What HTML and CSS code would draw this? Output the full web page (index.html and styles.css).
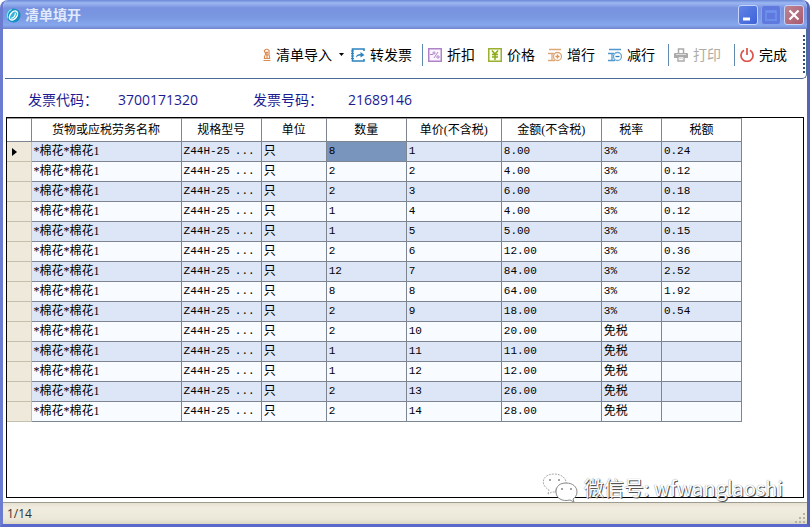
FILE: index.html
```html
<!DOCTYPE html>
<html lang="zh-CN">
<head>
<meta charset="utf-8">
<title>清单填开</title>
<link rel="stylesheet" href="styles.css">
</head>
<body>
<div class="window">
  <header class="titlebar">
    <svg class="app-icon" viewBox="0 0 16 16" aria-hidden="true">
      <circle cx="8" cy="8" r="7.5" fill="#1590c4"/>
      <path d="M2 11A7 7 0 0 1 6 1.500" stroke="#7ee0ee" stroke-width="1.500" fill="none"/>
      <ellipse cx="8" cy="8" rx="3.500" ry="5.500" transform="rotate(38 8 8)" fill="#35b4d8" stroke="#fff" stroke-width="1.500"/>
      <path d="M5.500 11C10 10 10 7 10 5" stroke="#fff" stroke-width="1.200" fill="none"/>
    </svg>
    <h1 class="title">清单填开</h1>
    <div class="controls">
      <button class="ctl" aria-label="最小化"><svg viewBox="0 0 18 18"><path d="M4 13H11" stroke="#fff" stroke-width="3"/></svg></button>
      <button class="ctl ctl-max" aria-label="最大化" disabled><svg viewBox="0 0 18 18"><path d="M4 5H14V14H4ZM4 6H14" stroke="#6f93ee" stroke-width="1.500" fill="none"/></svg></button>
      <button class="ctl ctl-close" aria-label="关闭"><svg viewBox="0 0 18 18"><path d="M4.500 4.500L13.500 13.500M13.500 4.500L4.500 13.500" stroke="#fff" stroke-width="2.200"/></svg></button>
    </div>
  </header>

  <nav class="toolbar">
    <button class="tool">
      <svg class="narrow" viewBox="0 0 8 14"><path d="M1.500 4.500V2.500Q4 0 6 2.500V7H2.500V4.500H5M1.500 7.500V10.500H6.500V7.500M0.500 12.500H7.500M4 3.500V10" stroke="#dc8a50" stroke-width="1.200" fill="none"/></svg>
      <span>清单导入</span>
      <svg class="caret" viewBox="0 0 5 3"><path d="M0 0H5L2.500 3Z" fill="#000"/></svg>
    </button>
    <button class="tool">
      <svg viewBox="0 0 14 14"><path d="M13 3V1H1.500V13H13V11" stroke="#2d84bd" stroke-width="1.600" fill="none"/><path d="M0 3H3M0 5.500H3M0 8H3M0 10.500H3" stroke="#2d84bd"/><path d="M5 9.500Q5 6 9.500 6V4L13.500 7L9.500 9.500V7.500Q6.500 7.500 5 9.500Z" fill="#2d84bd"/></svg>
      <span>转发票</span>
    </button>
    <i class="sep"></i>
    <button class="tool">
      <svg viewBox="0 0 14 14"><rect x=".75" y=".75" width="12.500" height="12.500" fill="#fbf5ff" stroke="#b083c8" stroke-width="1.500"/><path d="M2 6.500H5M10 4L6 10" stroke="#b083c8"/><circle cx="6" cy="5" r="1.100" fill="none" stroke="#b083c8"/><circle cx="10" cy="9" r="1.200" fill="none" stroke="#b083c8"/></svg>
      <span>折扣</span>
    </button>
    <button class="tool tool-next">
      <svg viewBox="0 0 14 14"><rect x=".75" y=".75" width="12.500" height="12.500" fill="#fafde9" stroke="#9caf35" stroke-width="1.500"/><path d="M4 2.500L7 6L10 2.500M7 6V12M4 6.500H10M4 9H10" stroke="#8ba91b" stroke-width="1.500" fill="none"/></svg>
      <span>价格</span>
    </button>
    <button class="tool tool-next">
      <svg viewBox="0 0 14 14"><path d="M1 1.500H13M0 5.500H6M0 12.500H7M4 5.500V12.500" stroke="#dda878" stroke-width="1.300" fill="none"/><circle cx="9.500" cy="8.500" r="4" fill="#fff" stroke="#dda878" stroke-width="1.300"/><path d="M7.500 8.500H11.500M9.500 6.500V10.500" stroke="#dc9550" stroke-width="1.300"/></svg>
      <span>增行</span>
    </button>
    <button class="tool tool-next">
      <svg viewBox="0 0 14 14"><path d="M1 1.500H13M0 5.500H6M0 12.500H7M4 5.500V12.500" stroke="#5199cd" stroke-width="1.300" fill="none"/><circle cx="9.500" cy="8.500" r="4" fill="#fff" stroke="#68a9d8" stroke-width="1.300"/><path d="M7.500 8.500H11.500" stroke="#307fb9" stroke-width="1.300"/></svg>
      <span>减行</span>
    </button>
    <i class="sep sep-wide"></i>
    <button class="tool" disabled>
      <svg viewBox="0 0 14 14"><path d="M4.500 5V1H9.500V5" stroke="#aaa" stroke-width="1.500" fill="none"/><path d="M1 5H13Q14 5 14 6V10H0V6Q0 5 1 5Z" fill="#aaa"/><path d="M4 8.500H10V13H4Z" fill="#fff" stroke="#aaa" stroke-width="1.500"/><path d="M4 10.500H10M2 6.500H12" stroke="#ddd"/></svg>
      <span>打印</span>
    </button>
    <i class="sep sep-wide"></i>
    <button class="tool">
      <svg viewBox="0 0 14 14"><path d="M4 2.200A6 6 0 1 0 10 2.200M7 0V7" stroke="#dc5148" stroke-width="1.700" fill="none"/></svg>
      <span>完成</span>
    </button>
    <i class="grip"></i>
  </nav>

  <main class="content">
    <dl class="info">
      <div><dt>发票代码：</dt><dd>3700171320</dd></div>
      <div><dt>发票号码：</dt><dd>21689146</dd></div>
    </dl>
    <div class="grid">
      <table>
        <colgroup><col class="c-mark"><col class="c-name"><col class="c-spec"><col class="c-unit"><col class="c-qty"><col class="c-price"><col class="c-sum"><col class="c-rate"><col class="c-tax"></colgroup>
        <thead><tr><th></th><th>货物或应税劳务名称</th><th>规格型号</th><th>单位</th><th>数量</th><th>单价(不含税)</th><th>金额(不含税)</th><th>税率</th><th>税额</th></tr></thead>
        <tbody>
          <tr><th><svg class="pointer" viewBox="0 0 5 8"><path d="M0 0L5 4L0 8Z"/></svg></th><td>*棉花*棉花1</td><td><div class="spec"><span>Z44H-25</span><span>...</span></div></td><td>只</td><td class="num selected">8</td><td class="num">1</td><td class="num">8.00</td><td class="num">3%</td><td class="num">0.24</td></tr>
          <tr><th></th><td>*棉花*棉花1</td><td><div class="spec"><span>Z44H-25</span><span>...</span></div></td><td>只</td><td class="num">2</td><td class="num">2</td><td class="num">4.00</td><td class="num">3%</td><td class="num">0.12</td></tr>
          <tr><th></th><td>*棉花*棉花1</td><td><div class="spec"><span>Z44H-25</span><span>...</span></div></td><td>只</td><td class="num">2</td><td class="num">3</td><td class="num">6.00</td><td class="num">3%</td><td class="num">0.18</td></tr>
          <tr><th></th><td>*棉花*棉花1</td><td><div class="spec"><span>Z44H-25</span><span>...</span></div></td><td>只</td><td class="num">1</td><td class="num">4</td><td class="num">4.00</td><td class="num">3%</td><td class="num">0.12</td></tr>
          <tr><th></th><td>*棉花*棉花1</td><td><div class="spec"><span>Z44H-25</span><span>...</span></div></td><td>只</td><td class="num">1</td><td class="num">5</td><td class="num">5.00</td><td class="num">3%</td><td class="num">0.15</td></tr>
          <tr><th></th><td>*棉花*棉花1</td><td><div class="spec"><span>Z44H-25</span><span>...</span></div></td><td>只</td><td class="num">2</td><td class="num">6</td><td class="num">12.00</td><td class="num">3%</td><td class="num">0.36</td></tr>
          <tr><th></th><td>*棉花*棉花1</td><td><div class="spec"><span>Z44H-25</span><span>...</span></div></td><td>只</td><td class="num">12</td><td class="num">7</td><td class="num">84.00</td><td class="num">3%</td><td class="num">2.52</td></tr>
          <tr><th></th><td>*棉花*棉花1</td><td><div class="spec"><span>Z44H-25</span><span>...</span></div></td><td>只</td><td class="num">8</td><td class="num">8</td><td class="num">64.00</td><td class="num">3%</td><td class="num">1.92</td></tr>
          <tr><th></th><td>*棉花*棉花1</td><td><div class="spec"><span>Z44H-25</span><span>...</span></div></td><td>只</td><td class="num">2</td><td class="num">9</td><td class="num">18.00</td><td class="num">3%</td><td class="num">0.54</td></tr>
          <tr><th></th><td>*棉花*棉花1</td><td><div class="spec"><span>Z44H-25</span><span>...</span></div></td><td>只</td><td class="num">2</td><td class="num">10</td><td class="num">20.00</td><td>免税</td><td></td></tr>
          <tr><th></th><td>*棉花*棉花1</td><td><div class="spec"><span>Z44H-25</span><span>...</span></div></td><td>只</td><td class="num">1</td><td class="num">11</td><td class="num">11.00</td><td>免税</td><td></td></tr>
          <tr><th></th><td>*棉花*棉花1</td><td><div class="spec"><span>Z44H-25</span><span>...</span></div></td><td>只</td><td class="num">1</td><td class="num">12</td><td class="num">12.00</td><td>免税</td><td></td></tr>
          <tr><th></th><td>*棉花*棉花1</td><td><div class="spec"><span>Z44H-25</span><span>...</span></div></td><td>只</td><td class="num">2</td><td class="num">13</td><td class="num">26.00</td><td>免税</td><td></td></tr>
          <tr><th></th><td>*棉花*棉花1</td><td><div class="spec"><span>Z44H-25</span><span>...</span></div></td><td>只</td><td class="num">2</td><td class="num">14</td><td class="num">28.00</td><td>免税</td><td></td></tr>
        </tbody>
      </table>
    </div>
  </main>

  <footer class="status">
    <span>1/14</span>
    <svg class="resize" viewBox="0 0 11 11"><path d="M9 0h2v2h-2zM9 4h2v2h-2zM9 8h2v2h-2zM5 4h2v2h-2zM5 8h2v2h-2zM1 8h2v2h-2z" fill="#b9b29f"/></svg>
  </footer>

  <div class="watermark">
    <svg viewBox="0 0 36 30"><g fill="#fff" stroke="#aaa" stroke-dasharray="2 1"><path d="M6 21L7 17C-3 11 1 1 12 1C20 1 25 6 24 11C15 11 12 18 14 19L10 19Z"/><path d="M14 19C14 13 18 10 24 10C31 10 35 14 35 19C35 22 33 25 31 26L32 29L28 27C20 29 14 25 14 19Z" stroke="#888" stroke-dasharray="none"/></g><path d="M7 7h2M16 7h2M19 16h2M28 16h2" stroke="#888" stroke-width="1.500"/></svg>
    <span>微信号: wfwanglaoshi</span>
  </div>
</div>
</body>
</html>
```
FILE: styles.css
```css
* { box-sizing: border-box; }
body {
  margin: 0;
  background: #fff;
  font-family: "Open Sans", "Noto Sans CJK SC", sans-serif;
  font-size: 14px;
  color: #000;
}
button {
  border: 0;
  padding: 0;
  background: none;
  font: inherit;
  color: inherit;
}
.window {
  position: relative;
  display: flex;
  flex-direction: column;
  height: 100vh;
  border: 3px solid #6a7bd0;
  border-top: 0;
  border-right-color: #5662b4;
  border-bottom-color: #5a67cc;
  border-radius: 8px 8px 0 0;
  background: #fff;
  overflow: hidden;
}
.titlebar {
  display: flex;
  align-items: center;
  flex: none;
  gap: 4px;
  height: 29px;
  margin: 0 -3px;
  padding: 1px 6px 0;
  background: linear-gradient(#6c88d6, #9cb8f2 3px, #7892df 8px, #7a98e2 18px, #86a8ee 25px, #7186cf);
}
.app-icon { width: 15px; height: 15px; }
.title {
  flex: 1;
  margin: 0;
  font-size: 14px;
  font-weight: 700;
  line-height: 20px;
  color: #e0eafc;
}
.controls { display: flex; gap: 3px; }
.ctl {
  width: 20px;
  height: 20px;
  border: 1px solid #c5d4f8;
  border-radius: 3px;
  background: linear-gradient(135deg, #6084e6, #3e62d8);
}
.ctl svg { display: block; width: 18px; height: 18px; }
.ctl-max { border-color: #88a2eb; background: #6079df; }
.ctl-close { background: linear-gradient(135deg, #bd8593, #a9596e); }

.toolbar {
  display: flex;
  align-items: center;
  justify-content: flex-end;
  flex: none;
  height: 50px;
  margin-left: 2px;
  padding-top: 2px;
  border-bottom: 1px solid #496c94;
  border-right: 1px solid #496c94;
  border-bottom-right-radius: 5px;
  line-height: 20px;
}
.tool { display: flex; align-items: center; gap: 5px; white-space: nowrap; }
.tool svg { width: 14px; height: 14px; }
.tool .narrow { width: 8px; }
.tool .caret { width: 5px; height: 3px; margin: 0 7px 0 2px; }
.tool:disabled { color: #b0aca2; }
.tool-next { margin-left: 13px; }
.sep { width: 1px; height: 22px; margin: 0 5px 0 10px; background: #6289ae; }
.sep-wide { margin-left: 13px; }
.grip { width: 2px; height: 40px; margin: 0 1px 0 16px; background: repeating-linear-gradient(#35557f 0 2px, #fff 2px 4px); }

.content { display: flex; flex-direction: column; flex: 1; padding: 0 3px 4px; }
.info {
  display: flex;
  margin: 0;
  padding: 11px 22px 7px;
  gap: 55px;
  line-height: 20px;
  color: #1c1c92;
}
.info div { display: flex; gap: 20px; }
.info div + div { gap: 25px; }
.info dd { margin: 0; }
.grid { flex: 1; border: 1px solid #000; }

table {
  table-layout: fixed;
  width: 735px;
  border-collapse: collapse;
  font-family: "Liberation Serif", "Noto Sans CJK SC", serif;
  font-size: 12px;
  line-height: 19px;
}
.c-mark { width: 24px; }
.c-name { width: 150px; }
.c-spec, .c-qty, .c-tax { width: 80px; }
.c-unit { width: 65px; }
.c-price { width: 95px; }
.c-sum { width: 100px; }
.c-rate { width: 60px; }
th, td { height: 20px; padding: 0 2px; border: 1px solid #7d8590; font-weight: 400; white-space: nowrap; text-align: left; }
thead th { height: 23px; text-align: center; }
tr > :first-child { border-left: 0; }
thead th { border-top-color: #999; }
tbody tr:nth-child(odd) { background: #dde6f6; }
tbody tr:nth-child(even) { background: #f8fbff; }
tbody th { padding-left: 5px; background: #efe9dc; border-color: #c5bfae; }
.pointer { display: block; width: 5px; height: 8px; }
.num, .spec { font-family: "Liberation Mono", "Noto Sans CJK SC", monospace; font-size: 11px; }
.selected { background: #7a95bd; }
.spec { display: flex; justify-content: space-between; padding-right: 4px; }

.status {
  display: flex;
  justify-content: space-between;
  align-items: center;
  flex: none;
  height: 22px;
  padding: 0 2px 0 4px;
  border-top: 1px solid #9c9d90;
  background: linear-gradient(#e6e1d2, #f0ecdf 5px, #ece8d9 16px, #dcd7c4);
  font-size: 12px;
  color: #333;
}
.resize { width: 11px; height: 11px; align-self: flex-end; }

.watermark {
  position: absolute;
  right: 24px;
  bottom: 21px;
  display: flex;
  align-items: center;
  gap: 6px;
  font-family: "Noto Sans CJK SC", sans-serif;
  font-size: 20px;
  line-height: 30px;
  color: #fff;
  text-shadow: 1px 1px 0 #555, 0 0 1px #777;
}
.watermark svg { width: 36px; height: 30px; }
```
